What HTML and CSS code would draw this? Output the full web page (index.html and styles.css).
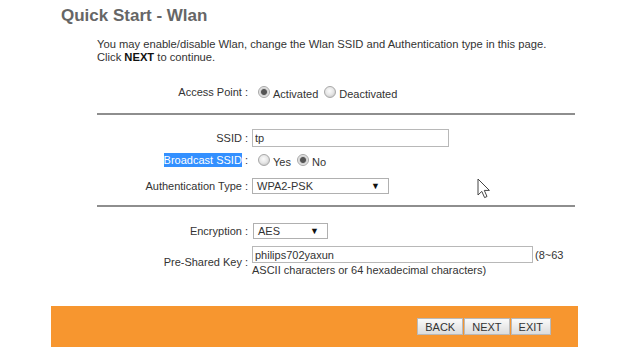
FILE: index.html
```html
<!DOCTYPE html>
<html lang="en">
<head>
    <meta charset="UTF-8">
    <title>Quick Start - Wlan</title>
    <link rel="stylesheet" href="styles.css">
</head>
<body>
    <div class="page">
        <h1 class="title">Quick Start - Wlan</h1>

        <div class="content">
            <p class="intro">You may enable/disable Wlan, change the Wlan SSID and Authentication type in this page.<br>Click <b>NEXT</b> to continue.</p>

            <div class="row row-ap">
                <span class="label">Access Point :</span>
                <span class="field">
                    <input type="radio" class="radio" name="ap" checked><span class="opt">Activated</span>
                    <input type="radio" class="radio" name="ap"><span class="opt">Deactivated</span>
                </span>
            </div>

            <hr class="divider">

            <div class="row row-ssid">
                <span class="label">SSID :</span>
                <span class="field"><input type="text" class="text-input ssid-input" value="tp"></span>
            </div>

            <div class="row row-bcast">
                <span class="label"><span class="selected">Broadcast SSID</span> :</span>
                <span class="field">
                    <input type="radio" class="radio" name="bc"><span class="opt">Yes</span>
                    <input type="radio" class="radio" name="bc" checked><span class="opt">No</span>
                </span>
            </div>

            <div class="row row-auth">
                <span class="label">Authentication Type :</span>
                <span class="field">
                    <span class="select auth-select"><span>WPA2-PSK</span><span class="arrow">&#9660;</span></span>
                </span>
            </div>

            <hr class="divider divider-2">

            <div class="row row-enc">
                <span class="label">Encryption :</span>
                <span class="field">
                    <span class="select enc-select"><span>AES</span><span class="arrow">&#9660;</span></span>
                </span>
            </div>

            <div class="row row-psk">
                <span class="label">Pre-Shared Key :</span>
                <span class="field">
                    <span class="psk-line"><input type="text" class="text-input psk-input" value="philips702yaxun"><span class="hint">(8~63</span></span>
                    <span class="hint-line">ASCII characters or 64 hexadecimal characters)</span>
                </span>
            </div>
        </div>

        <div class="actions">
            <button class="btn">BACK</button>
            <button class="btn">NEXT</button>
            <button class="btn">EXIT</button>
        </div>
    </div>

    <!-- mouse pointer from the capture -->
    <svg class="cursor" width="14" height="21" viewBox="0 0 14 21">
        <path d="M1 1 L1 17 L4.8 13.4 L7.6 19.6 L10 18.5 L7.3 12.4 L12.4 12.4 Z" fill="#fff" stroke="#444" stroke-width="1" stroke-linejoin="round"/>
    </svg>
</body>
</html>
```

FILE: styles.css
```css
* {
    margin: 0;
    padding: 0;
    box-sizing: border-box;
}

body {
    background-color: #fff;
    color: #333;
    font-family: 'Liberation Sans', Arial, sans-serif;
    font-size: 11px;
}

.page {
    position: relative;
    width: 640px;
    height: 360px;
    overflow: hidden;
}

.title {
    margin: 6px 0 0 61px;
    font-size: 17px;
    line-height: 20px;
    font-weight: bold;
    color: #666;
}

.content {
    margin-left: 97px;
    width: 478px;
}

.intro {
    margin-top: 12px;
    font-size: 11.2px;
    line-height: 13px;
    color: #333;
}

.intro b {
    color: #111;
}

.row {
    display: grid;
    grid-template-columns: 151px 1fr;
    column-gap: 4px;
    align-items: center;
}

.label {
    text-align: right;
    white-space: nowrap;
}

.field {
    display: flex;
    align-items: center;
}

.row-ap {
    margin-top: 20px;
    height: 16px;
}

.row-ssid {
    margin-top: 14px;
    height: 18px;
}

.row-bcast {
    margin-top: 6px;
    height: 14px;
}

.row-auth {
    margin-top: 11px;
    height: 16px;
}

.row-enc {
    margin-top: 16px;
    height: 16px;
}

.row-psk {
    margin-top: 7px;
}

.divider {
    border: none;
    border-top: 2px solid #8e8e8e;
    margin-top: 13px;
}

.divider-2 {
    margin-top: 11px;
}

.selected {
    background-color: #3390ff;
    color: #fff;
    padding: 1px 0;
}

.radio {
    appearance: none;
    -webkit-appearance: none;
    width: 12px;
    height: 12px;
    border-radius: 50%;
    border: 1px solid #a8a8a8;
    background: radial-gradient(circle at 45% 40%, #fbfbfb 0, #e6e6e6 4px, #cfcfcf 6px);
    margin: 0 3px 0 6px;
    flex-shrink: 0;
}

.radio:checked {
    background: radial-gradient(circle, #555 0, #555 2.5px, #cfcfcf 3.5px, #ececec 5px, #d4d4d4 6px);
}

.opt {
    position: relative;
    top: 2px;
}

.text-input {
    height: 18px;
    border: 1px solid #b8b8b8;
    padding: 0 2px;
    font-family: inherit;
    font-size: 11px;
    color: #333;
    background: #fff;
}

.ssid-input {
    width: 197px;
}

.psk-line {
    display: flex;
    align-items: center;
}

.psk-input {
    width: 281px;
    height: 17px;
}

.hint {
    margin-left: 2px;
}

.hint-line {
    display: block;
    margin-top: 1px;
    line-height: 13px;
}

.row-psk .field {
    display: block;
}

.select {
    display: flex;
    justify-content: space-between;
    align-items: center;
    height: 16px;
    border: 1px solid #b0b0b0;
    background: #fff;
    padding: 0 8px 0 4px;
}

.arrow {
    font-size: 9px;
    color: #111;
}

.auth-select {
    width: 137px;
}

.enc-select {
    width: 75px;
    margin-left: 1px;
}

.actions {
    margin: 29px 0 0 51px;
    width: 527px;
    height: 41px;
    background-color: #f7962f;
    display: flex;
    justify-content: flex-end;
    align-items: center;
    gap: 1px;
    padding-right: 27px;
}

.btn {
    height: 17px;
    padding: 0 7px;
    border: 1px solid #b9b9b9;
    background: linear-gradient(#fafafa, #dcdcdc);
    font-family: inherit;
    font-size: 11px;
    color: #333;
    cursor: pointer;
}

.cursor {
    position: absolute;
    left: 477px;
    top: 178px;
}
```
